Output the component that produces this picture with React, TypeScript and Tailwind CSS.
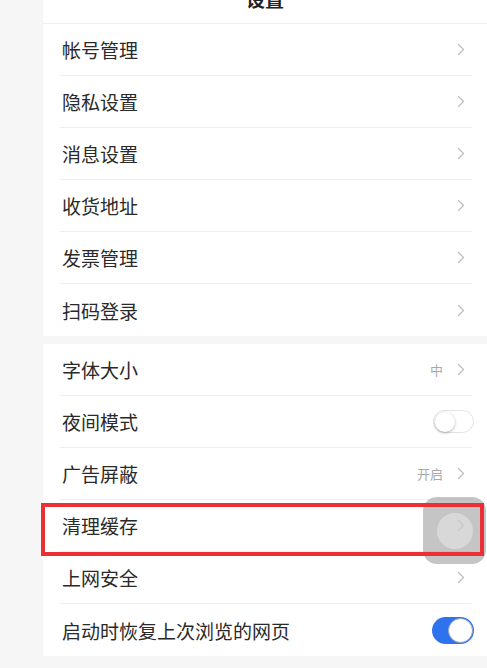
import React from "react";

const font = { fontFamily: '"Noto Sans CJK SC", "Noto Sans", sans-serif' };

function Chevron() {
  return (
    <svg width="8" height="13" viewBox="0 0 8 13" className="shrink-0">
      <path d="M1.5 1.5 L6.5 6.5 L1.5 11.5" fill="none" stroke="#bdbdbd" strokeWidth="1.2" strokeLinecap="round" strokeLinejoin="round" />
    </svg>
  );
}

function ToggleOff() {
  return (
    <div className="w-[41px] h-[23px] rounded-full bg-white border border-[#e3e3e3] flex items-center px-[1px] -mr-[2px]">
      <div className="w-[20px] h-[20px] rounded-full bg-white shadow-[0_1px_3px_rgba(0,0,0,0.3)]" />
    </div>
  );
}

function ToggleOn() {
  return (
    <div className="w-[42px] h-[27px] rounded-full bg-[#2f72ee] flex items-center justify-end pr-[1px] -mr-[2px]">
      <div className="w-[25px] h-[25px] rounded-full bg-white border border-[#9aa4b4]" />
    </div>
  );
}

type Item = { label: string; value?: string; right?: "chev" | "off" | "on" };

function Row({ item, last }: { item: Item; last: boolean }) {
  return (
    <div className={`h-[52px] ml-[17px] mr-[15px] flex items-center justify-between ${last ? "" : "border-b border-[#efefef]"}`}>
      <span className="pl-[2px] text-[19px] leading-none text-[#2a2a2a]">{item.label}</span>
      {item.right === "off" ? (
        <ToggleOff />
      ) : item.right === "on" ? (
        <ToggleOn />
      ) : (
        <div className="flex items-center gap-[14px] pr-[7px]">
          {item.value && <span className="text-[13px] leading-none text-[#a8a8a8]">{item.value}</span>}
          <Chevron />
        </div>
      )}
    </div>
  );
}

const group1: Item[] = [
  { label: "帐号管理" },
  { label: "隐私设置" },
  { label: "消息设置" },
  { label: "收货地址" },
  { label: "发票管理" },
  { label: "扫码登录" },
];

const group2: Item[] = [
  { label: "字体大小", value: "中" },
  { label: "夜间模式", right: "off" },
  { label: "广告屏蔽", value: "开启" },
  { label: "清理缓存" },
  { label: "上网安全" },
  { label: "启动时恢复上次浏览的网页", right: "on" },
];

export default function App() {
  return (
    <div className="relative w-[487px] h-[668px] overflow-hidden bg-[#f6f6f6] flex" style={font}>
      <div className="ml-[43px] flex-1 flex flex-col">
        <div className="h-[24px] bg-white border-b border-[#efefef] overflow-hidden flex justify-center">
          <span className="-mt-[11px] text-[19px] leading-[19px] font-bold text-[#222]">设置</span>
        </div>
        <div className="bg-white">
          {group1.map((it, i) => (
            <Row key={it.label} item={it} last={i === group1.length - 1} />
          ))}
        </div>
        <div className="h-[8px]" />
        <div className="bg-white">
          {group2.map((it, i) => (
            <Row key={it.label} item={it} last={i === group2.length - 1} />
          ))}
        </div>
      </div>
      <div className="absolute left-[423px] top-[497px] w-[63px] h-[67px] rounded-[14px] bg-[rgba(150,150,150,0.55)] flex items-center justify-center">
        <div className="w-[36px] h-[36px] rounded-full bg-[rgba(240,240,240,0.45)]" />
      </div>
      <div className="absolute left-[41px] top-[503px] w-[443px] h-[53px] border-[4px] border-[#ea2f35]" />
    </div>
  );
}
